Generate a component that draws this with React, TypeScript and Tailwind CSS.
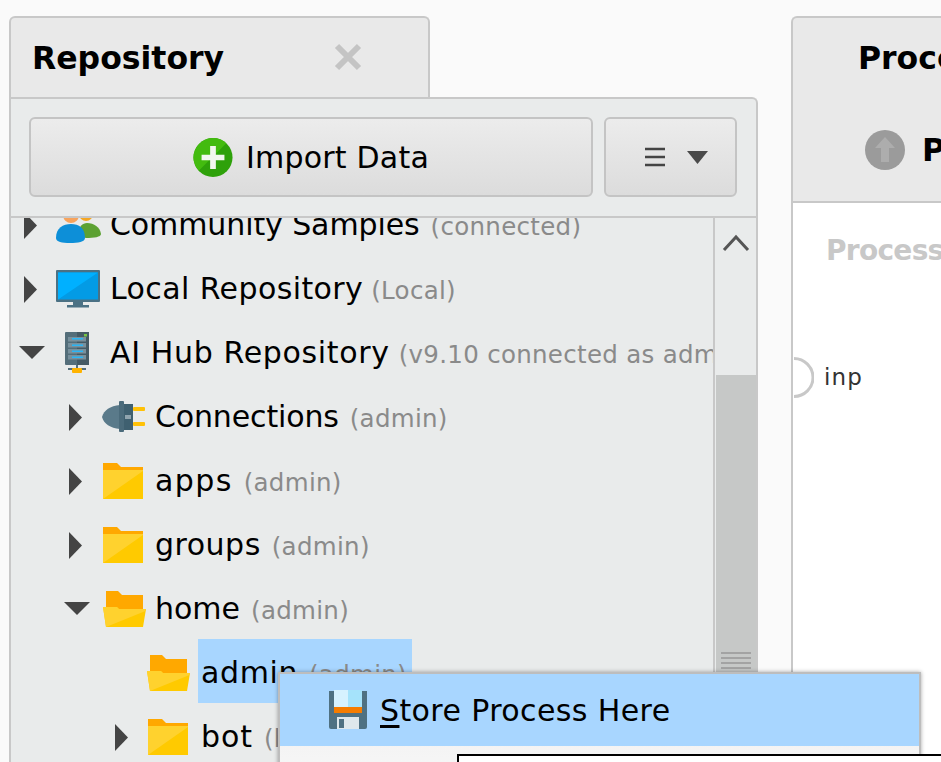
import React from "react";

const FONT = "font-['DejaVu_Sans',sans-serif]";

function ArrowRight() {
  return (
    <svg width="26" height="30" viewBox="0 0 26 30" className="block">
      <path d="M5 2 L5 29 L18 15.5 Z" fill="#444" />
    </svg>
  );
}
function ArrowDown() {
  return (
    <svg width="26" height="30" viewBox="0 0 26 30" className="block">
      <path d="M0 8 L26 8 L13 21 Z" fill="#444" />
    </svg>
  );
}
function Folder() {
  return (
    <svg width="41" height="37" viewBox="0 0 41 37" className="block">
      <path d="M0 0 H14 L18 4 H40 V8 H0 Z" fill="#ffa800" />
      <rect x="0" y="5" width="40" height="31" fill="#ffca00" />
      <path d="M0 6 H40 V8 L0 36 Z" fill="#ffd22e" />
      <rect x="0" y="4.5" width="40" height="2.5" fill="#ffa800" />
    </svg>
  );
}
function FolderOpen() {
  return (
    <svg width="43" height="37" viewBox="0 0 43 37" className="block">
      <path d="M3 0 H15 L19 4 H40 V18 H3 Z" fill="#ffa800" />
      <path d="M0 16 H14 L16 18 H43 L40 36 H3 Z" fill="#ffca00" />
      <path d="M0 16 H14 L16 18 H43 L42.5 20 L3 36 Z" fill="#ffd22e" />
    </svg>
  );
}
function Monitor() {
  return (
    <svg width="44" height="38" viewBox="0 0 44 38" className="block">
      <rect x="0" y="0" width="44" height="32" rx="1" fill="#4b7184" />
      <rect x="2" y="2.5" width="40" height="27" fill="#039be5" />
      <path d="M2 2.5 H42 L2 29.5 Z" fill="#00b0ff" />
      <rect x="17" y="32" width="10" height="3" fill="#4b7184" />
      <rect x="11" y="35" width="22" height="2.5" fill="#4b7184" />
    </svg>
  );
}
function Server() {
  return (
    <svg width="24" height="42" viewBox="0 0 24 42" className="block">
      <rect x="0" y="0" width="24" height="33" rx="1" fill="#546e7a" />
      <rect x="12" y="0" width="12" height="33" fill="#455a64" />
      <rect x="3" y="5" width="18" height="4.5" fill="#78909c" />
      <rect x="3" y="11" width="18" height="4.5" fill="#78909c" />
      <rect x="3" y="17" width="18" height="4.5" fill="#78909c" />
      <rect x="3" y="23" width="18" height="4.5" fill="#78909c" />
      <rect x="7" y="6" width="11" height="1.5" fill="#29b6f6" />
      <rect x="7" y="12.5" width="11" height="1.5" fill="#29b6f6" />
      <rect x="7" y="18.5" width="11" height="1.5" fill="#29b6f6" />
      <rect x="7" y="24.5" width="11" height="1.5" fill="#29b6f6" />
      <rect x="19" y="2" width="3" height="2.5" fill="#76c442" />
      <rect x="11" y="33" width="2" height="4" fill="#546e7a" />
      <rect x="3" y="36" width="18" height="2" fill="#546e7a" />
      <rect x="7" y="36" width="10" height="5" rx="1" fill="#ffb300" />
    </svg>
  );
}
function Plug() {
  return (
    <svg width="44" height="32" viewBox="0 0 44 32" className="block">
      <path d="M0 16 C2 9 8 5 18 4 V28 C8 27 2 23 0 16 Z" fill="#5a7a8a" />
      <rect x="17" y="0" width="5" height="31" rx="1" fill="#4b6b7b" />
      <rect x="22" y="3" width="9" height="26" fill="#3f6070" />
      <rect x="23" y="14" width="6" height="4" fill="#90a4ae" />
      <rect x="31" y="6" width="12" height="4" rx="1" fill="#ffc107" />
      <rect x="31" y="21" width="12" height="4" rx="1" fill="#ffc107" />
    </svg>
  );
}
function Users() {
  return (
    <svg width="46" height="38" viewBox="0 0 46 38" className="block">
      <circle cx="30" cy="8" r="7" fill="#f5a623" />
      <path d="M22 30 C22 20 27 17 31 17 C38 17 44 21 45 28 C45 31 38 32 30 32 Z" fill="#5ca132" />
      <circle cx="15" cy="9" r="8" fill="#f7a35c" />
      <path d="M0 32 C0 22 7 18 15 18 C23 18 29 22 29 32 C29 36 22 37 14 37 C6 37 0 36 0 32 Z" fill="#0d8fd8" />
    </svg>
  );
}
function Floppy() {
  return (
    <svg width="38" height="40" viewBox="0 0 38 40" className="block">
      <path d="M0 1 H38 V37 Q38 39 36 39 H2 Q0 39 0 37 Z" fill="#4f7182" />
      <rect x="5" y="0" width="28" height="17" fill="#d6f2ff" />
      <rect x="19" y="0" width="14" height="17" fill="#a5e3fb" />
      <rect x="5" y="17" width="28" height="6" fill="#f57c00" />
      <rect x="8" y="27" width="22" height="12" fill="#dfe8ec" />
      <rect x="10" y="29" width="5" height="9" fill="#4f7182" />
    </svg>
  );
}

type RowProps = {
  pad: string;
  arrow?: "right" | "down";
  icon: React.ReactNode;
  iconSlot: string;
  name: string;
  note: string;
  track: string;
  selected?: boolean;
};

function Row({ pad, arrow, icon, iconSlot, name, note, track, selected }: RowProps) {
  return (
    <div className={`flex h-16 shrink-0 items-center whitespace-nowrap ${pad}`}>
      <div className="w-[36px] shrink-0 pt-[4px]">
        {arrow === "right" && <ArrowRight />}
        {arrow === "down" && <ArrowDown />}
      </div>
      <div className={`flex shrink-0 items-center pt-[4px] ${iconSlot}`}>{icon}</div>
      <div className={`flex h-16 items-baseline pt-[13px] pl-[3px] ${selected ? "bg-[#a8d6ff] pr-[5px]" : "pr-[3px]"}`}>
        <span className={`text-[30px] leading-[42px] text-black ${track}`}>{name}</span>
        <span className="ml-[11px] text-[24.5px] tracking-[0.3px] text-[#8a8a8a]">{note}</span>
      </div>
    </div>
  );
}

export default function App() {
  return (
    <div className={`relative flex h-[762px] w-[941px] overflow-hidden bg-[#fafafa] pt-4 pl-[9px] ${FONT}`}>
      {/* left panel */}
      <div className="flex w-[749px] shrink-0 flex-col">
        <div className="flex h-[82px] w-[421px] items-start justify-between rounded-t-md border-x-2 border-t-2 border-[#c8c8c8] bg-[#e9e9e9] pt-[18px] pr-[66px] pl-[21px]">
          <span className="text-[31.5px] leading-[44px] font-bold text-black">Repository</span>
          <svg width="28" height="28" viewBox="0 0 28 28" className="mt-[7px]">
            <path d="M3 3 L25 25 M25 3 L3 25" stroke="#c4c4c4" strokeWidth="6" />
          </svg>
        </div>
        <div className="-mt-px flex min-h-0 flex-1 flex-col rounded-tr-md border-x-2 border-t-2 border-[#c8c8c8] bg-[#e9ebeb]">
          <div className="flex h-[119px] shrink-0 items-start gap-[11px] border-b-2 border-[#c8c8c8] pt-[18px] pl-[18px]">
            <div className="flex h-[80px] w-[564px] items-center justify-center gap-[13px] rounded-md border-2 border-[#c4c4c4] bg-gradient-to-b from-[#ececec] to-[#dcdcdc]">
              <svg width="40" height="41" viewBox="0 0 42 42">
                <circle cx="21" cy="21" r="20.5" fill="#2ea10a" />
                <path d="M21 .5 A20.5 20.5 0 0 1 35 6 L6 35 A20.5 20.5 0 0 1 21 .5 Z" fill="#43bb0f" />
                <path d="M18 9 H24 V18 H33 V24 H24 V33 H18 V24 H9 V18 H18 Z" fill="#f2f7ee" />
              </svg>
              <span className="text-[30px] tracking-[0.2px] text-black">Import Data</span>
            </div>
            <div className="flex h-[80px] w-[133px] items-center justify-center gap-[22px] rounded-md border-2 border-[#c4c4c4] bg-gradient-to-b from-[#ececec] to-[#dcdcdc] pl-[12px]">
              <svg width="20" height="20" viewBox="0 0 20 20">
                <path d="M0 2 H20 M0 10 H20 M0 18 H20" stroke="#444" strokeWidth="2.5" />
              </svg>
              <svg width="21" height="13" viewBox="0 0 21 13">
                <path d="M0 0 H21 L10.5 13 Z" fill="#4a4a4a" />
              </svg>
            </div>
          </div>
          <div className="flex min-h-0 flex-1">
            <div className="min-w-0 flex-1 overflow-hidden border-r-2 border-[#c8c8c8]">
              <div className="-mt-[27px]">
                <Row pad="pl-[8px]" arrow="right" icon={<div className="ml-px"><Users /></div>} iconSlot="w-[52px]" track="tracking-[-0.1px]" name="Community Samples" note="(connected)" />
                <Row pad="pl-[8px]" arrow="right" icon={<div className="ml-px"><Monitor /></div>} iconSlot="w-[52px]" track="tracking-[0.4px] -mr-[3px]" name="Local Repository" note="(Local)" />
                <Row pad="pl-[8px]" arrow="down" icon={<div className="ml-[10px]"><Server /></div>} iconSlot="w-[52px]" track="tracking-[0.65px] -mr-[2px]" name="AI Hub Repository" note="(v9.10 connected as admin)" />
                <Row pad="pl-[53px]" arrow="right" icon={<div className="ml-[2px]"><Plug /></div>} iconSlot="w-[52px]" track="tracking-[-0.15px]" name="Connections" note="(admin)" />
                <Row pad="pl-[53px]" arrow="right" icon={<div className="ml-[3px]"><Folder /></div>} iconSlot="w-[52px]" track="tracking-[1.4px]" name="apps" note="(admin)" />
                <Row pad="pl-[53px]" arrow="right" icon={<div className="ml-[3px]"><Folder /></div>} iconSlot="w-[52px]" track="tracking-[0.5px]" name="groups" note="(admin)" />
                <Row pad="pl-[53px]" arrow="down" icon={<div className="ml-[3px]"><FolderOpen /></div>} iconSlot="w-[52px]" track="tracking-normal" name="home" note="(admin)" />
                <Row pad="pl-[99px]" icon={<div className="ml-[1px]"><FolderOpen /></div>} iconSlot="w-[52px]" track="tracking-[0.6px]" name="admin" note="(admin)" selected />
                <Row pad="pl-[99px]" arrow="right" icon={<div className="ml-[2px]"><Folder /></div>} iconSlot="w-[52px]" track="tracking-[0.9px]" name="bot" note="(bot)" />
              </div>
            </div>
            <div className="flex w-[41px] shrink-0 flex-col">
              <div className="flex h-[157px] shrink-0 justify-center pt-[16px]">
                <svg width="28" height="18" viewBox="0 0 28 18">
                  <path d="M2 16 L14 3 L26 16" fill="none" stroke="#555" strokeWidth="3" />
                </svg>
              </div>
              <div className="ml-px flex flex-1 flex-col items-center bg-[#c6c8c7] pt-[276px]">
                <svg width="32" height="22" viewBox="0 0 32 22">
                  <path d="M1 2 H31 M1 7 H31 M1 12 H31 M1 17 H31" stroke="#a3a3a3" strokeWidth="2" />
                </svg>
              </div>
            </div>
          </div>
        </div>
      </div>

      {/* right panel */}
      <div className="ml-[33px] flex min-w-0 flex-1 flex-col">
        <div className="flex h-[187px] shrink-0 flex-col rounded-tl-md border-t-2 border-l-2 border-b-2 border-[#c8c8c8] bg-[#e9e9e9]">
          <div className="h-[82px] shrink-0 overflow-hidden pt-[18px] pl-[65px]">
            <span className="text-[31.5px] leading-[44px] font-bold whitespace-nowrap text-black">Process</span>
          </div>
          <div className="flex items-center pt-[29px] pl-[71px]">
            <svg width="42" height="42" viewBox="0 0 42 42" className="shrink-0">
              <circle cx="21" cy="21" r="20" fill="#9b9b9b" />
              <path d="M21 8 L31 19 H25 V33 H17 V19 H11 Z" fill="#adadad" />
            </svg>
            <span className="ml-[16px] text-[31.5px] leading-[42px] font-bold text-black">P</span>
          </div>
        </div>
        <div className="flex-1 border-l-2 border-[#c8c8c8] bg-white">
          <div className="overflow-hidden whitespace-nowrap pt-[27px] pl-[33px] text-[28px] leading-[42px] font-bold tracking-[-0.7px] text-[#c8c8c8]">Process</div>
          <div className="mt-[85px] flex items-center">
            <svg width="21" height="41" viewBox="0 0 21 41" className="shrink-0">
              <path d="M1 1.5 A19 19 0 0 1 1 39.5" fill="none" stroke="#c8c8c8" strokeWidth="3" />
            </svg>
            <span className="ml-[10px] text-[23px] tracking-[1.2px] text-[#333]">inp</span>
          </div>
        </div>
      </div>

      {/* context menu */}
      <div className="absolute top-[672px] left-[278px] h-[120px] w-[643px] border-2 border-[#bdbdbd] bg-gradient-to-b from-[#ededed] to-[#f8f8f8] shadow-[0_0_4px_rgba(0,0,0,0.35)]">
        <div className="flex h-[72px] items-center bg-[#a8d6ff] pl-[49px]">
          <Floppy />
          <span className="ml-[13px] text-[30px] tracking-[0.4px] text-black"><span className="underline underline-offset-4">S</span>tore Process Here</span>
        </div>
        <div className="absolute top-[80px] left-[177px] h-[60px] w-[500px] border-t-2 border-l-2 border-black bg-white" />
      </div>
    </div>
  );
}
